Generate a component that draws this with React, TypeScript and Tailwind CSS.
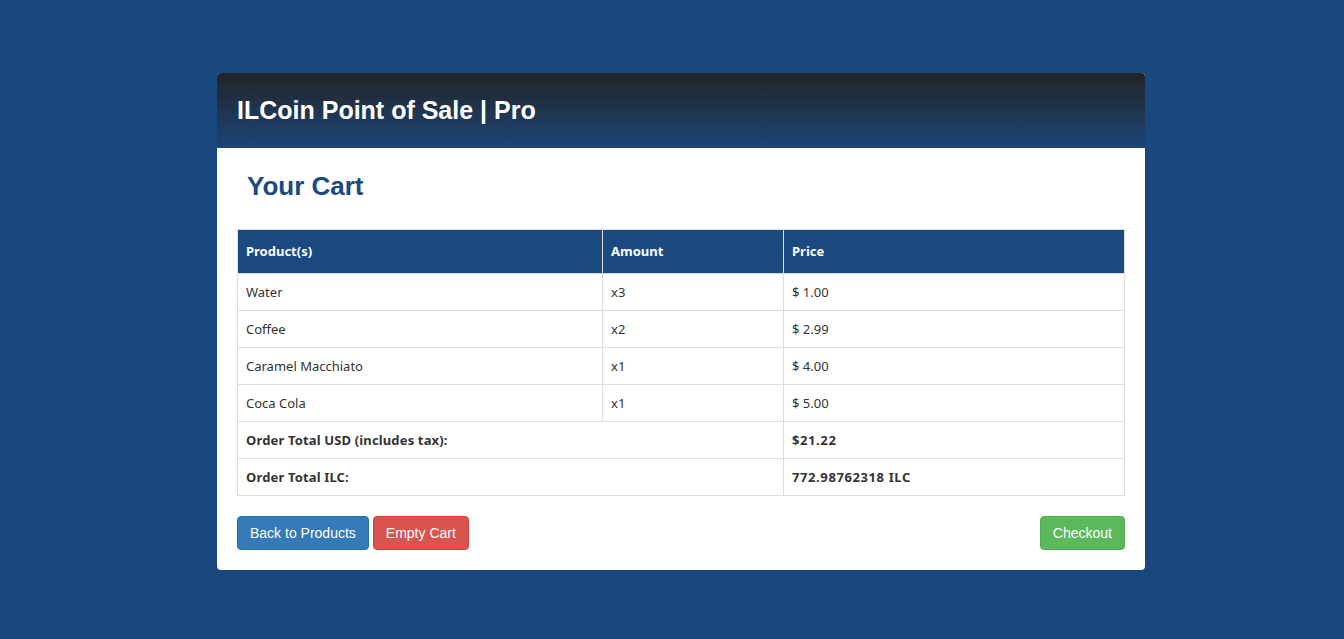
import React from 'react';

interface CartItem {
  name: string;
  qty: number;
  price: string;
}

const items: CartItem[] = [
  { name: 'Water', qty: 3, price: '1.00' },
  { name: 'Coffee', qty: 2, price: '2.99' },
  { name: 'Caramel Macchiato', qty: 1, price: '4.00' },
  { name: 'Coca Cola', qty: 1, price: '5.00' },
];

const tableFont = "font-['Trebuchet_MS','Noto_Sans',sans-serif]";

const App: React.FC = () => {
  return (
    <div className="min-h-screen bg-[#19487f] pt-[73px] font-['Liberation_Sans',Arial,sans-serif]">
      <div className="ml-[217px] w-[928px] rounded-[4px] bg-white overflow-hidden">
        {/* header */}
        <div className="h-[75px] bg-gradient-to-b from-[#212326] to-[#1a4579] px-5 flex items-center">
          <h1 className="text-white text-[25px] font-bold pt-[1px]">ILCoin Point of Sale | Pro</h1>
        </div>

        <div className="px-5 pb-5">
          <h2 className="text-[#1a4a80] text-[26px] font-bold pl-[10px] pt-[24px] pb-[29px] leading-[28px]">Your Cart</h2>

          <table className={`w-full border-collapse text-[13px] text-[#333] ${tableFont}`}>
            <thead>
              <tr className="bg-[#1a4a80] text-white h-[44px]">
                <th className="w-[365px] text-left font-bold px-2 border border-[#ddd]">Product(s)</th>
                <th className="w-[181px] text-left font-bold px-2 border border-[#ddd]">Amount</th>
                <th className="text-left font-bold px-2 border border-[#ddd]">Price</th>
              </tr>
            </thead>
            <tbody>
              {items.map((item) => (
                <tr key={item.name} className="h-[37px]">
                  <td className="px-2 pt-[1px] border border-[#ddd]">{item.name}</td>
                  <td className="px-2 pt-[1px] border border-[#ddd]">x{item.qty}</td>
                  <td className="px-2 pt-[1px] border border-[#ddd]">$ {item.price}</td>
                </tr>
              ))}
              <tr className="h-[37px] font-bold">
                <td colSpan={2} className="px-2 pt-[1px] border border-[#ddd] tracking-[0.15px]">Order Total USD (includes tax):</td>
                <td className="px-2 pt-[1px] border border-[#ddd] tracking-[0.6px]">$21.22</td>
              </tr>
              <tr className="h-[37px] font-bold">
                <td colSpan={2} className="px-2 pt-[1px] border border-[#ddd] tracking-[0.15px]">Order Total ILC:</td>
                <td className="px-2 pt-[1px] border border-[#ddd] tracking-[0.6px]">772.98762318 ILC</td>
              </tr>
            </tbody>
          </table>

          <div className="mt-5 flex items-center">
            <button className="h-[34px] px-3 rounded-[4px] bg-[#337ab7] border border-[#2e6da4] text-white text-[14px]">
              Back to Products
            </button>
            <button className="ml-1 h-[34px] px-3 rounded-[4px] bg-[#d9534f] border border-[#d43f3a] text-white text-[14px]">
              Empty Cart
            </button>
            <button className="ml-auto h-[34px] px-3 rounded-[4px] bg-[#5cb85c] border border-[#4cae4c] text-white text-[14px]">
              Checkout
            </button>
          </div>
        </div>
      </div>
    </div>
  );
};

export default App;
